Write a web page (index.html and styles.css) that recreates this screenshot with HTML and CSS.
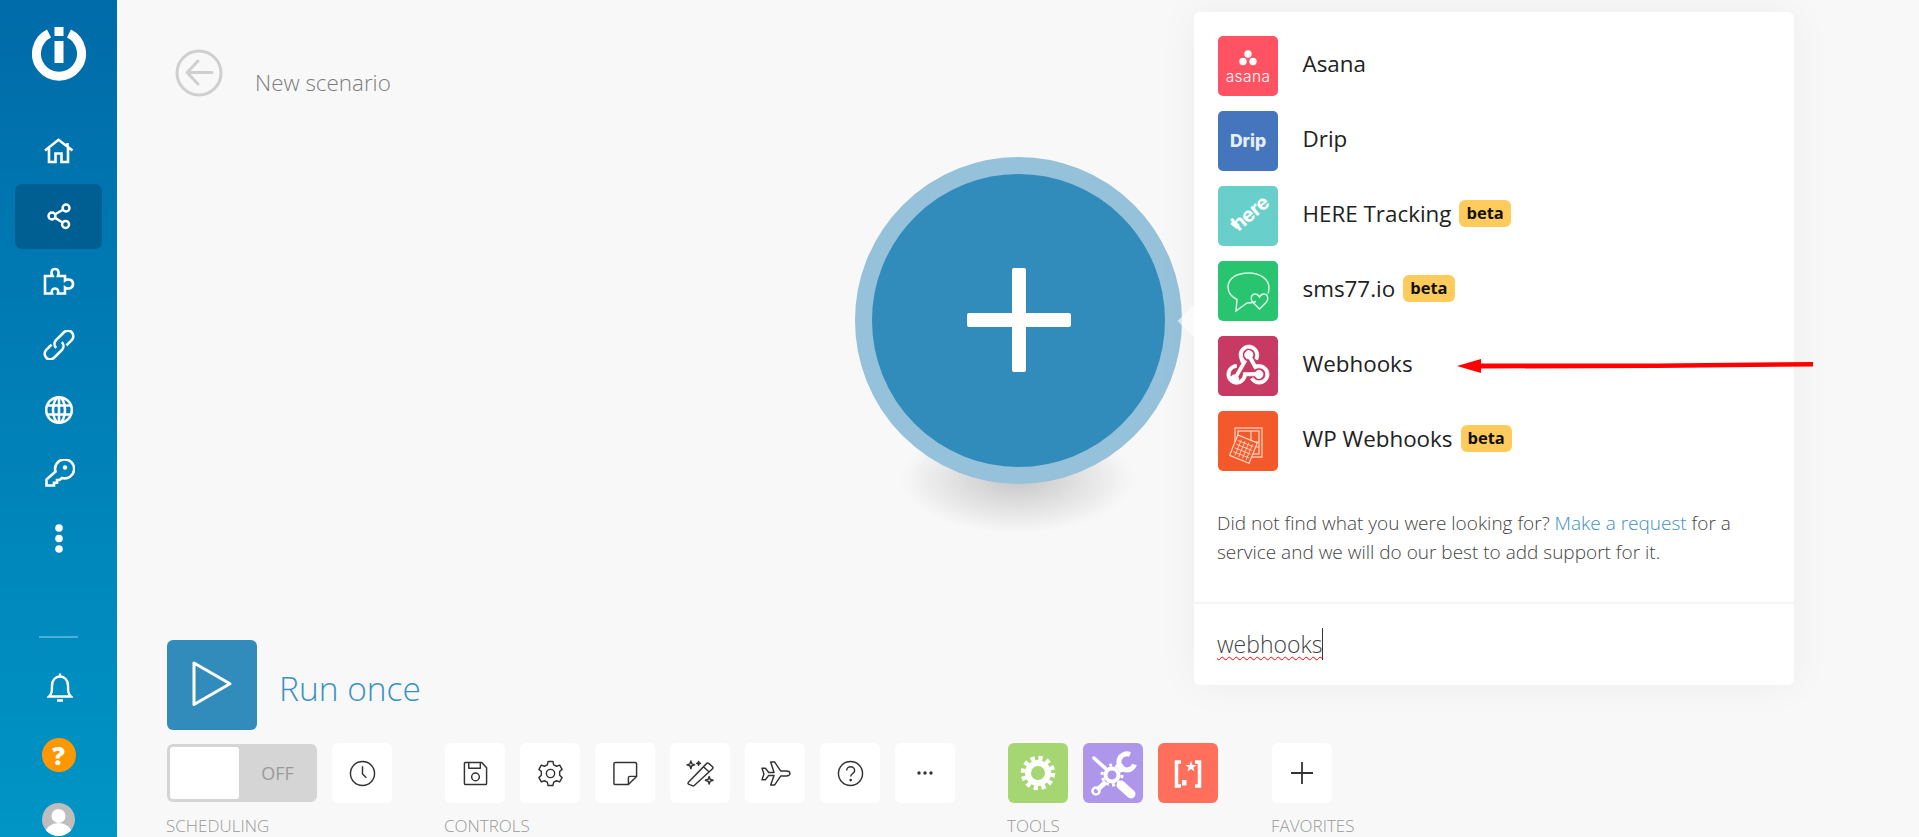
FILE: index.html
```html
<!DOCTYPE html>
<html lang="en">
<head>
<meta charset="utf-8">
<title>New scenario</title>
<link rel="stylesheet" href="styles.css">
</head>
<body>
<aside class="sidebar">
  <svg class="logo" viewBox="0 0 54 54"><path d="M17 6.500A22.500 22.500 0 1 0 37 6.500" fill="none" stroke="#fff" stroke-width="9"/><rect x="22.500" y="0" width="9" height="9" fill="#fff"/><rect x="22.500" y="14" width="9" height="22" fill="#fff"/></svg>
  <nav class="nav">
    <a class="nav-item"><svg class="ni" viewBox="0 0 32 26"><path d="M2 12.500 15.500 1.800 29.500 12.500M24.500 8.500V5M6 9.500V24H12.500V15.500H18.500V24H25V9.500"/></svg></a>
    <a class="nav-item active"><svg class="ni" viewBox="0 0 32 32"><circle cx="23.500" cy="7.500" r="3.700"/><circle cx="8.500" cy="16" r="3.700"/><circle cx="23" cy="25" r="3.700"/><path d="M20.300 9.400 11.800 14.200M11.800 18 19.800 23"/></svg></a>
    <a class="nav-item"><svg class="ni" viewBox="0 0 32 28"><path d="M2 9H9.500C7.500 5.500 8.500 2 12 2 15.500 2 16.500 5.500 15 9H22V13.500C25 11.500 30 12.500 30 17 30 21.500 25 22.500 22 20.500V26.500H15C16 23.500 14.500 21.500 12 21.500 9.500 21.500 8 23.500 9 26.500H2Z"/></svg></a>
    <a class="nav-item"><svg class="ni" viewBox="0 0 30 30"><g transform="rotate(-45 15 15)"><path d="M10 9.500H2.500A5.500 5.500 0 0 0 2.500 20.500H14A5.500 5.500 0 0 0 19 15"/><path d="M20 20.500H27.500A5.500 5.500 0 0 0 27.500 9.500H16A5.500 5.500 0 0 0 11 15"/></g></svg></a>
    <a class="nav-item"><svg class="ni" viewBox="0 0 30 30"><circle cx="15" cy="15" r="12.800"/><ellipse cx="15" cy="15" rx="6" ry="12.800"/><path d="M3 10.500H27M3 19.500H27M15 2.200V27.800"/></svg></a>
    <a class="nav-item"><svg class="ni" viewBox="0 0 30 30"><path d="M11.500 12.500A9.500 9.500 0 1 1 18 19L15.500 21H13V23.700H10V26.500H2.500V20.500Z"/><circle class="fill" cx="21" cy="8.500" r="2.200"/></svg></a>
    <a class="nav-item"><svg class="ni dots" viewBox="0 0 10 30"><circle class="fill" cx="5" cy="4" r="3.800"/><circle class="fill" cx="5" cy="14.500" r="3.800"/><circle class="fill" cx="5" cy="25" r="3.800"/></svg></a>
  </nav>
  <div class="nav-bottom">
    <hr class="rule">
    <a class="nav-item bell"><svg class="ni" viewBox="0 0 26 32"><path d="M13 1.500V4M2 24.500C5 21.500 5 19 5 13.500 5 8 8.500 4.500 13 4.500 17.500 4.500 21 8 21 13.500 21 19 21 21.500 24 24.500ZM10 28.500H16"/></svg></a>
    <span class="help-dot">?</span>
    <span class="avatar"><svg viewBox="0 0 33 33"><circle cx="16.500" cy="13" r="7" fill="#fff"/><ellipse cx="16.500" cy="30" rx="13" ry="10" fill="#fff"/></svg></span>
  </div>
</aside>

<main class="main">
  <header class="head">
    <svg class="back" viewBox="0 0 48 48"><circle cx="24" cy="24" r="22" /><path d="M37 23.500H13M23 12 12 23.500 23 35"/></svg>
    <h1 class="title">New scenario</h1>
  </header>

  <section class="dock">
    <div class="run">
      <a class="run-btn"><svg viewBox="0 0 90 90"><path d="M27 23V64.500L63 43.800Z"/></svg></a>
      <span class="run-text">Run once</span>
    </div>
    <div class="groups">
      <div class="group">
        <div class="row">
          <div class="toggle"><span class="knob"></span><span class="off">OFF</span></div>
          <a class="btn"><svg class="ti" viewBox="0 0 28 28"><circle cx="14" cy="14" r="12.500"/><path d="M14 6.500V14.500L18 18.500"/></svg></a>
        </div>
        <span class="label">SCHEDULING</span>
      </div>
      <div class="group">
        <div class="row">
          <a class="btn"><svg class="ti" viewBox="0 0 28 28"><path d="M3 2.500H20.500L25.500 8V24A1.500 1.500 0 0 1 24 25.500H4A1.500 1.500 0 0 1 2.500 24V3ZM7 2.500V8.500H19V2.500"/><circle cx="14" cy="17.500" r="4"/></svg></a>
          <a class="btn"><svg class="ti" viewBox="0 0 28 28"><path d="M11.500 1.500H16.500L17.300 5 20.300 6.500 23.500 5.300 26 9.700 23.500 12V15.900L26 18.300 23.500 22.700 20.300 21.500 17.300 23 16.500 26.500H11.500L10.700 23 7.700 21.500 4.500 22.700 2 18.300 4.500 15.900V12L2 9.700 4.500 5.300 7.700 6.500 10.700 5Z"/><circle cx="14" cy="14" r="4.300"/></svg></a>
          <a class="btn"><svg class="ti" viewBox="0 0 28 28"><path d="M17 25.500H3.500A1.500 1.500 0 0 1 2 24V4A1.500 1.500 0 0 1 3.500 2.500H24A1.500 1.500 0 0 1 25.500 4V17ZM17 25.500V18.500A1.500 1.500 0 0 1 18.500 17H25.500"/></svg></a>
          <a class="btn"><svg class="ti wide" viewBox="0 0 30 28"><path d="M2.500 23 21.500 3.500A1.500 1.500 0 0 1 23.500 3.500L27.500 7A1.500 1.500 0 0 1 27.500 9L8.500 26.500A1.500 1.500 0 0 1 6.500 26.500L2.500 25A1.500 1.500 0 0 1 2.500 23ZM18 7 24 12.500M5 1 6 4 9 5 6 6 5 9 4 6 1 5 4 4ZM13 1.500 13.600 3 15 3.500 13.600 4 13 5.500 12.400 4 11 3.500 12.400 3ZM24 17 25 20 28 21 25 22 24 25 23 22 20 21 23 20Z"/></svg></a>
          <a class="btn"><svg class="ti wide" viewBox="0 0 32 28"><path d="M2 8.500H5.500L9 13H14.500L11 2H15L21.500 11.500H27C30 11.500 31 13 31 14 31 15 30 16.500 27 16.500H21.500L15 26H11L14.500 16H9L5.500 20.500H2L4 14.500Z"/></svg></a>
          <a class="btn"><svg class="ti" viewBox="0 0 28 28"><circle cx="14" cy="14" r="12.500"/><path d="M10 11C10 8.500 12 7 14 7 16.500 7 18.300 8.700 18.300 10.800 18.300 14 14.200 14 14.200 17"/><circle class="fill" cx="14.200" cy="20.800" r="1.400"/></svg></a>
          <a class="btn"><svg class="ti small" viewBox="0 0 16 4"><circle class="fill" cx="2" cy="2" r="1.700"/><circle class="fill" cx="8" cy="2" r="1.700"/><circle class="fill" cx="14" cy="2" r="1.700"/></svg></a>
        </div>
        <span class="label">CONTROLS</span>
      </div>
      <div class="group">
        <div class="row">
          <a class="btn green"><svg class="tool" viewBox="0 0 60 60"><g fill="none" stroke="#fff"><circle cx="30" cy="30" r="10" stroke-width="6"/><circle cx="30" cy="30" r="15" stroke-width="4.500" stroke-dasharray="4.200 3.654"/></g></svg></a>
          <a class="btn purple"><svg class="tool" viewBox="0 0 60 60"><g fill="none" stroke="#fff"><path d="M11 15 23 26" stroke-width="3.500" stroke-linecap="round"/><path d="M38 42 48 51" stroke-width="9" stroke-linecap="round"/><path d="M35 26 40 22" stroke-width="5"/><path d="M23 39 14 47" stroke-width="5"/><circle cx="29" cy="32" r="6.500" stroke-width="4"/><circle cx="29" cy="32" r="10" stroke-width="3" stroke-dasharray="3 3.280"/><path d="M47 11.500A8 8 0 1 0 51.500 21.500" stroke-width="5"/><circle cx="13" cy="48" r="3.500" stroke-width="2.500"/></g></svg></a>
          <a class="btn coral"><svg class="tool" viewBox="0 0 60 60"><g fill="none" stroke="#fff" stroke-width="3.500"><path d="M23 19H18.500V43H23M37 19H41.500V43H37"/></g><rect x="24" y="37" width="4.500" height="5.500" fill="#fff"/><path d="M33 18 34.500 22 38.500 22 35.300 24.500 36.500 28.500 33 26 29.500 28.500 30.700 24.500 27.500 22 31.500 22Z" fill="#fff"/></svg></a>
        </div>
        <span class="label">TOOLS</span>
      </div>
      <div class="group fav">
        <div class="row">
          <a class="btn"><svg class="ti plus" viewBox="0 0 22 22"><path d="M11 0V22M0 11H22"/></svg></a>
        </div>
        <span class="label">FAVORITES</span>
      </div>
    </div>
  </section>

  <div class="node-shadow"></div>
  <a class="node"><span class="bar-h"></span><span class="bar-v"></span></a>

  <section class="panel">
    <ul class="apps">
      <li class="app"><span class="tile asana"><svg class="asana-dots" viewBox="0 0 18 16"><circle cx="9" cy="4" r="3.700"/><circle cx="4" cy="11.500" r="3.700"/><circle cx="14" cy="11.500" r="3.700"/></svg><span class="asana-word">asana</span></span><span class="name">Asana</span></li>
      <li class="app"><span class="tile drip"><span class="drip-word">Drip</span></span><span class="name">Drip</span></li>
      <li class="app"><span class="tile here"><span class="here-word">here</span></span><span class="name">HERE Tracking</span><span class="beta">beta</span></li>
      <li class="app"><span class="tile sms"><svg viewBox="0 0 60 60"><g fill="none" stroke="#d6f5e2" stroke-width="1.500"><path d="M38 40.500C35 41.500 32 42 29 42L18 50 19 38.500C13 35.500 10 31 10 26 10 17 19 12 30.500 12 42 12 51 18 51 27 51 29 50.500 31 50 32.500"/><path d="M41.500 48 34.500 41C31.500 37 34 33 37 33 39 33 40.500 34 41.500 36 42.500 34 44 33 46 33 49 33 51.500 37 48.500 41Z"/></g></svg></span><span class="name">sms77.io</span><span class="beta">beta</span></li>
      <li class="app"><span class="tile hook"><svg viewBox="-2 -1.500 28 28"><path fill="#fff" stroke="#fff" stroke-width=".4" d="M10.460,19C9,21.070 6.150,21.590 4.090,20.150C2.040,18.710 1.560,15.840 3,13.750C3.870,12.500 5.210,11.830 6.580,11.770L6.630,13.200C5.720,13.270 4.840,13.740 4.270,14.560C3.270,16 3.580,17.940 4.950,18.910C6.330,19.870 8.260,19.500 9.260,18.070C9.570,17.620 9.750,17.130 9.820,16.630V15.620L15.400,15.580L15.470,15.470C16,14.550 17.150,14.230 18.050,14.750C18.950,15.270 19.260,16.430 18.730,17.350C18.200,18.260 17.040,18.580 16.140,18.060C15.730,17.830 15.440,17.450 15.310,17.040L11.240,17.060C11.130,17.730 10.870,18.380 10.460,19M17.740,11.860C20.270,12.170 22.070,14.440 21.760,16.930C21.450,19.430 19.150,21.200 16.620,20.890C15.130,20.710 13.900,19.860 13.190,18.680L14.430,17.960C14.920,18.730 15.750,19.280 16.750,19.410C18.500,19.620 20.050,18.430 20.260,16.760C20.470,15.090 19.230,13.560 17.500,13.350C16.960,13.290 16.440,13.360 15.970,13.530L15.120,13.970L12.540,9.200H12.320C11.260,9.170 10.440,8.290 10.470,7.210C10.500,6.130 11.400,5.290 12.450,5.310C13.500,5.360 14.330,6.230 14.300,7.310C14.280,7.760 14.110,8.150 13.840,8.470L15.740,12C16.350,11.830 17.030,11.770 17.740,11.860M8.250,9.140C7.250,6.790 8.310,4.100 10.620,3.120C12.940,2.140 15.620,3.250 16.620,5.600C17.210,6.970 17.090,8.470 16.420,9.670L15.180,8.950C15.600,8.140 15.670,7.150 15.270,6.220C14.590,4.620 12.780,3.850 11.230,4.500C9.670,5.160 8.970,7 9.650,8.600C9.930,9.260 10.400,9.770 10.970,10.110L11.360,10.320L7.290,17.360C7.330,17.420 7.380,17.500 7.400,17.600C7.880,18.530 7.530,19.690 6.620,20.200C5.700,20.690 4.550,20.350 4.060,19.430C3.580,18.500 3.930,17.350 4.840,16.850C5.230,16.640 5.660,16.590 6.060,16.680L9.130,11.390C8.770,10.950 8.470,10.050 8.250,9.140Z"/></svg></span><span class="name">Webhooks</span></li>
      <li class="app"><span class="tile wp"><svg viewBox="0 0 60 60"><g fill="none" stroke="#ffd9c8" stroke-width="1.200"><rect x="17" y="17" width="27" height="29"/><rect x="20" y="20" width="21" height="23"/><path d="M33 20V31H41M33 36H41"/></g><g transform="rotate(22 25 38)"><rect x="15" y="27" width="21" height="22" fill="#f4592b" stroke="#ffd9c8" stroke-width="1.200"/><path d="M17 32H34M17 36H34M17 40H34M17 44H34M20 30V47M24 30V47M28 30V47M32 30V47" stroke="#ffd9c8" stroke-width=".8"/></g></svg></span><span class="name">WP Webhooks</span><span class="beta">beta</span></li>
    </ul>
    <div class="note">
      <span class="note-line"><span>Did not find what you were looking for?</span> <a class="link">Make a request</a> <span>for a</span></span>
      <span class="note-line">service and we will do our best to add support for it.</span>
    </div>
    <div class="search"><span class="query">webhooks</span><span class="caret"></span></div>
  </section>
  <span class="pointer"></span>
  <svg class="arrow" viewBox="0 0 360 20"><path d="M0 10 24 3V7.500L200 7.500 356 6V10.500L200 12 24 12.500V17Z" fill="#f00"/></svg>
</main>
</body>
</html>
```
FILE: styles.css
```css
* { box-sizing: border-box; }
html, body { height: 100%; }
body {
  margin: 0;
  height: 837px;
  overflow: hidden;
  display: flex;
  background: #f8f8f8;
  font-family: "Open Sans", "Noto Sans", sans-serif;
  color: #222;
}
a { color: inherit; text-decoration: none; }
svg { display: block; }

/* sidebar */
.sidebar {
  width: 117px;
  flex: none;
  height: 837px;
  background: linear-gradient(180deg, #006ba8 0%, #0095c5 100%);
  display: flex;
  flex-direction: column;
  align-items: center;
  padding-top: 27px;
}
.logo { width: 54px; height: 54px; }
.nav { margin-top: 38px; display: flex; flex-direction: column; width: 87px; margin-left: -1px; }
.nav-item { height: 64.5px; display: flex; align-items: center; justify-content: center; border-radius: 7px; padding-left: 2px; flex: none; }
.nav-item.active { background: #005f92; height: 65px; }
.ni { width: 32px; height: 30px; fill: none; stroke: #fff; stroke-width: 2.6; }
.ni .fill { fill: #fff; stroke: none; }
.ni.dots { width: 10px; height: 30px; }
.nav-bottom { margin-top: auto; display: flex; flex-direction: column; align-items: center; width: 100%; }
.rule { width: 39px; height: 2px; margin: 0; border: 0; background: #4bb0d6; }
.bell { height: 50px; margin-top: 25px; }
.bell .ni { width: 26px; height: 32px; stroke-width: 2.4; }
.help-dot { width: 34px; height: 34px; margin-top: 25px; border-radius: 50%; background: #ff9800; color: #fff; font: 800 25px/34px "Open Sans", sans-serif; text-align: center; }
.avatar { width: 33px; height: 33px; margin-top: 31px; margin-bottom: 1px; border-radius: 50%; overflow: hidden; background: #bdbdbd; }

/* main canvas */
.main { position: relative; flex: 1; display: flex; flex-direction: column; justify-content: space-between; min-width: 0; }
.head { display: flex; align-items: center; padding: 49px 0 0 58px; gap: 32px; }
.back { width: 48px; height: 48px; fill: none; stroke: #cfcfcf; stroke-width: 3; stroke-linecap: round; stroke-linejoin: round; }
.title { margin: 20px 0 0; font-size: 22.4px; line-height: 28px; font-weight: 300; color: #7d7d7d; }

/* dock */
.dock { padding-left: 50px; }
.run { display: flex; align-items: center; gap: 22px; }
.run-btn { width: 90px; height: 90px; border-radius: 6px; background: #328cbb; }
.run-btn svg { fill: none; stroke: #fff; stroke-width: 3; stroke-linejoin: round; }
.run-text { font-size: 33.5px; font-weight: 300; color: #3b92c1; line-height: 48px; padding-top: 6px; }
.groups { display: flex; gap: 53px; margin-top: 13px; }
.group { display: flex; flex-direction: column; }
.fav { margin-left: 1px; }
.row { display: flex; align-items: center; gap: 15px; }
.label { font-size: 17px; line-height: 24px; margin-top: 11px; font-weight: 300; color: #999; margin-left: -1px; height: 23px; }
.btn { width: 60px; height: 60px; border-radius: 6px; background: #fff; display: flex; align-items: center; justify-content: center; flex: none; }
.ti { width: 27px; height: 27px; fill: none; stroke: #333; stroke-width: 1.5; stroke-linejoin: round; }
.ti.wide { width: 31px; }
.ti.small { width: 16px; height: 4px; }
.ti.plus { width: 22px; height: 22px; stroke-width: 1.8; }
.ti .fill { fill: #333; stroke: none; }
.toggle { width: 150px; height: 58px; border-radius: 6px; background: #d5d5d5; display: flex; align-items: center; padding: 3px; }
.knob { width: 69px; height: 52px; border-radius: 3px; background: #fff; }
.off { flex: 1; text-align: center; font-size: 18px; color: #9a9a9a; padding-left: 2px; }
.green { background: #a6d672; }
.purple { background: #ae97ea; }
.coral { background: #ff6f5b; }
.tool { width: 60px; height: 60px; }

/* node */
.node { position: absolute; left: 738px; top: 157px; width: 327px; height: 327px; border-radius: 50%; background: #328cbb; border: 17px solid #95c1da; }
.bar-h { position: absolute; left: 95px; top: 139px; width: 104px; height: 14px; border-radius: 2px; background: #fff; }
.bar-v { position: absolute; left: 140px; top: 94px; width: 14px; height: 104px; border-radius: 2px; background: #fff; }
.node-shadow { position: absolute; left: 783px; top: 425px; width: 234px; height: 108px; border-radius: 50%; background: radial-gradient(closest-side, rgba(0,0,0,.2), rgba(0,0,0,.08) 60%, rgba(0,0,0,0) 100%); }

/* panel */
.panel { position: absolute; left: 1077px; top: 12px; width: 600px; height: 673px; border-radius: 6px; background: #fff; box-shadow: 0 0 40px rgba(0,0,0,.05); display: flex; flex-direction: column; }
.apps { list-style: none; margin: 0; padding: 24px 0 0 24px; }
.app { display: flex; align-items: center; height: 60px; margin-bottom: 15px; }
.tile { position: relative; width: 60px; height: 60px; border-radius: 5px; flex: none; margin-right: 24.5px; color: #fff; display: flex; flex-direction: column; align-items: center; justify-content: center; overflow: hidden; }
.tile > svg { width: 60px; height: 60px; }
.asana { background: #ff5263; }
.drip { background: #4575bc; }
.here { background: #68cfcb; }
.here::after { content: ""; position: absolute; left: 13px; top: 36px; width: 8px; height: 5px; background: #fff; transform: rotate(38deg); }
.sms { background: #29c46f; }
.hook { background: #c73a63; }
.wp { background: #f4592b; }
.tile > .asana-dots { width: 18px; height: 16px; fill: #fff; margin-top: 3px; }
.asana-word { font: 300 15.5px/16px "Inter", sans-serif; letter-spacing: .4px; margin-top: 3px; }
.drip-word { font: 800 17.5px/20px "Inter", sans-serif; color: #e6eefa; }
.here-word { font: 700 20px/22px "Inter", sans-serif; letter-spacing: -.5px; margin-bottom: 6px; margin-left: 3px; transform: rotate(-40deg); }
.name, .beta { margin-bottom: 5px; }
.name { font-size: 22.4px; line-height: 28px; color: #222; }
.beta { margin-left: 8px; height: 27px; padding: 0 7px; border-radius: 6px; background: #ffcb5c; font-size: 16.5px; line-height: 26px; font-weight: 700; color: #111; }
.note { margin: 23px 30px 0 23px; font-size: 19px; line-height: 29px; color: #444; font-weight: 300; }
.note-line { display: block; white-space: nowrap; }
.link { color: #3b92c1; }
.search { position: absolute; left: 0; right: 0; bottom: 0; height: 83px; border-top: 2px solid #f5f5f5; padding: 24px 0 0 23px; display: flex; align-items: flex-start; }
.query { font-size: 23px; line-height: 32px; font-weight: 300; color: #3f444a; text-decoration: underline wavy #f00 1px; text-underline-offset: 3px; }
.caret { width: 1px; height: 32px; background: #333; }
.pointer { position: absolute; left: 1065px; top: 310px; width: 22px; height: 22px; background: rgba(255,255,255,.6); transform: rotate(45deg); }
.arrow { position: absolute; left: 1340px; top: 356px; width: 360px; height: 20px; }
```
